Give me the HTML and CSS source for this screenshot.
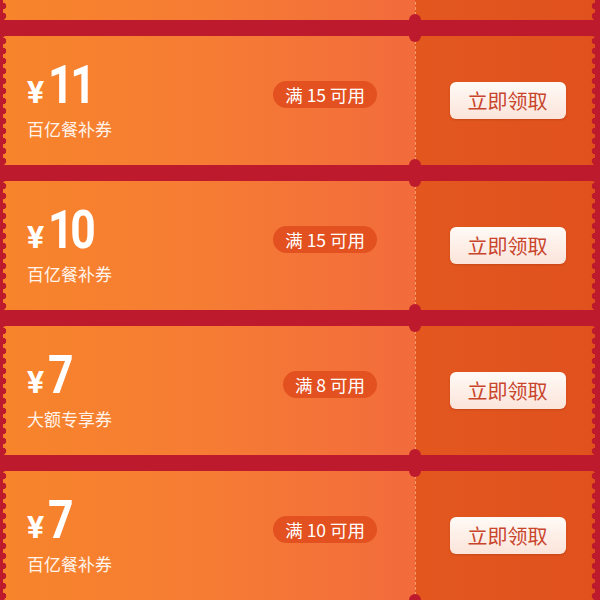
FILE: index.html
```html
<!DOCTYPE html>
<html lang="zh-CN">
<head>
  <meta charset="UTF-8">
  <title>领券中心</title>
  <link rel="stylesheet" href="styles.css">
</head>
<body>

  <div class="coupon-list">
    <!-- previous coupon, scrolled mostly out of view -->
    <div class="coupon">
      <div class="coupon-main"></div>
      <div class="coupon-side"></div>
    </div>

    <div class="coupon">
      <div class="coupon-main">
        <div class="amount">
          <div class="price"><span class="yen">¥</span><span class="num">11</span></div>
          <div class="label">百亿餐补券</div>
        </div>
        <span class="limit">满 15 可用</span>
      </div>
      <div class="coupon-side">
        <button class="get-btn">立即领取</button>
      </div>
    </div>

    <div class="coupon">
      <div class="coupon-main">
        <div class="amount">
          <div class="price"><span class="yen">¥</span><span class="num">10</span></div>
          <div class="label">百亿餐补券</div>
        </div>
        <span class="limit">满 15 可用</span>
      </div>
      <div class="coupon-side">
        <button class="get-btn">立即领取</button>
      </div>
    </div>

    <div class="coupon">
      <div class="coupon-main">
        <div class="amount">
          <div class="price"><span class="yen">¥</span><span class="num">7</span></div>
          <div class="label">大额专享券</div>
        </div>
        <span class="limit">满 8 可用</span>
      </div>
      <div class="coupon-side">
        <button class="get-btn">立即领取</button>
      </div>
    </div>

    <div class="coupon">
      <div class="coupon-main">
        <div class="amount">
          <div class="price"><span class="yen">¥</span><span class="num">7</span></div>
          <div class="label">百亿餐补券</div>
        </div>
        <span class="limit">满 10 可用</span>
      </div>
      <div class="coupon-side">
        <button class="get-btn">立即领取</button>
      </div>
    </div>
  </div>

</body>
</html>
```

FILE: styles.css
```css
body {
  margin: 0;
  height: 600px;
  overflow: hidden;
  background-color: #be1a2d;
  font-family: "Noto Sans CJK SC", "Noto Sans", sans-serif;
}

.coupon-list {
  display: flex;
  flex-direction: column;
  gap: 16px;
  margin-top: -109px;
  padding: 0 5px 0 3px;
}

.coupon {
  position: relative;
  display: grid;
  grid-template-columns: 412px 1fr;
  height: 129px;
}

/* scalloped edges */
.coupon::before,
.coupon::after {
  content: "";
  position: absolute;
  top: 0;
  bottom: 0;
  width: 5px;
  background-size: 5px 10px;
  background-repeat: repeat-y;
}

.coupon::before {
  left: 0;
  background-image: radial-gradient(circle at 0 50%, #be1a2d 3px, transparent 3.6px);
}

.coupon::after {
  right: 0;
  background-image: radial-gradient(circle at 100% 50%, #be1a2d 3px, transparent 3.6px);
}

.coupon-main {
  display: flex;
  align-items: center;
  justify-content: space-between;
  padding: 0 38px 0 24px;
  background: linear-gradient(90deg, #f7842b 0%, #f67c34 50%, #f26b3c 100%);
  border-radius: 3px 0 0 3px;
}

.amount {
  color: #fff;
  margin-top: -2px;
}

.price {
  display: flex;
  align-items: baseline;
  height: 50px;
}

.yen {
  font-family: Roboto, "Noto Sans", sans-serif;
  font-size: 32px;
  font-weight: 700;
  margin-right: 4px;
}

.num {
  display: inline-block;
  font-family: Roboto, "Noto Sans", sans-serif;
  font-size: 53px;
  font-weight: 700;
  letter-spacing: -4px;
  line-height: 50px;
  transform: scaleX(0.84);
  transform-origin: left;
}

.label {
  margin-top: 9px;
  font-size: 17px;
  line-height: 20px;
  color: #fff3ea;
}

.limit {
  margin-top: -12px;
  padding: 0 12px;
  height: 27px;
  line-height: 27px;
  border-radius: 14px;
  background-color: #e2511f;
  color: #fff;
  font-size: 17.5px;
  white-space: pre;
}

.coupon-side {
  position: relative;
  display: flex;
  align-items: center;
  justify-content: center;
  border-left: 1px dashed rgba(255, 190, 140, 0.7);
  background: linear-gradient(90deg, #e3571f 0%, #e0511e 100%);
  border-radius: 0 3px 3px 0;
}

/* notches on the dashed divider */
.coupon-side::before,
.coupon-side::after {
  content: "";
  position: absolute;
  left: -7px;
  width: 12px;
  height: 12px;
  border-radius: 50%;
  background-color: #be1a2d;
}

.coupon-side::before {
  top: -6px;
}

.coupon-side::after {
  bottom: -6px;
}

.get-btn {
  width: 116px;
  height: 37px;
  margin-left: 4px;
  padding: 0;
  border: none;
  border-radius: 6px;
  background: linear-gradient(180deg, #fffaf6 0%, #fbe4da 100%);
  box-shadow: 0 1px 2px rgba(120, 30, 0, 0.25);
  color: #c8452c;
  font-family: "Noto Sans CJK SC", sans-serif;
  font-size: 20px;
  cursor: pointer;
}
```
